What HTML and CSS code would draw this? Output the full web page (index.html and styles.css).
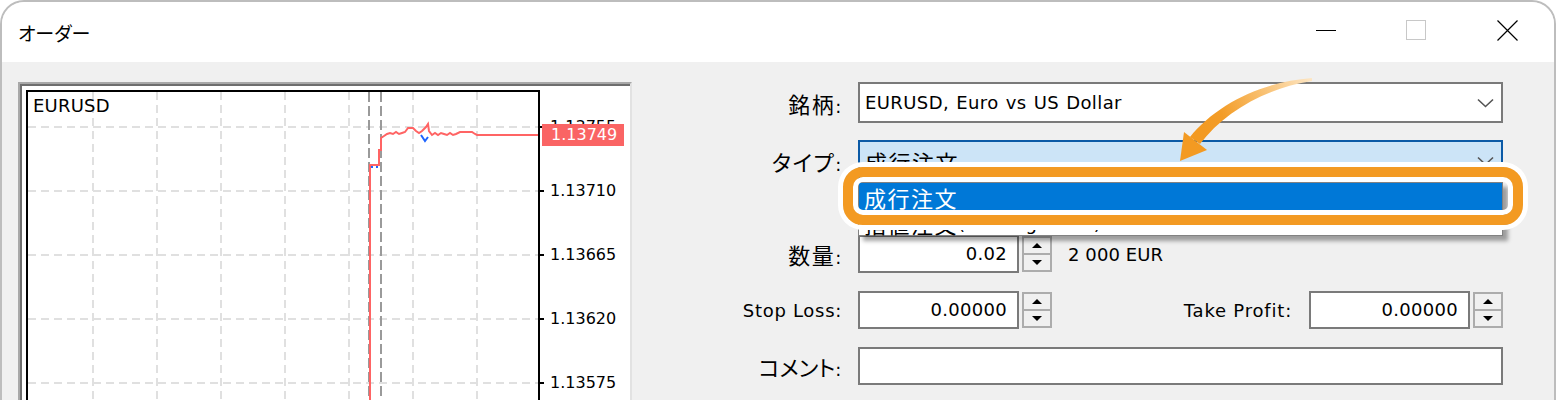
FILE: index.html
```html
<!DOCTYPE html>
<html lang="ja">
<head>
<meta charset="utf-8">
<title>オーダー</title>
<link rel="stylesheet" href="styles.css">
</head>
<body>
<div class="window">
  <div class="titlebar">
    <span class="title">オーダー</span>
    <div class="controls">
      <svg class="ctl-min" width="20" height="20" viewBox="0 0 20 20"><line x1="0" y1="10.5" x2="20" y2="10.5" stroke="#000" stroke-width="1"/></svg>
      <svg class="ctl-max" width="20" height="20" viewBox="0 0 20 20"><rect x="0.5" y="0.5" width="19" height="19" fill="none" stroke="#c8c8c8" stroke-width="1"/></svg>
      <svg class="ctl-close" width="21" height="21" viewBox="0 0 21 21"><path d="M0.5 0.5 L20.5 20.5 M20.5 0.5 L0.5 20.5" stroke="#000" stroke-width="1.2" fill="none"/></svg>
    </div>
  </div>
  <div class="body">
    <div class="chart">
      <div class="plot">
        <svg class="plot-svg" width="510" height="310" viewBox="28 92 510 310">
          <g stroke="#e0e0e0" stroke-width="2" stroke-dasharray="8 5" fill="none">
            <line x1="28" y1="127" x2="538" y2="127"/>
            <line x1="28" y1="191" x2="538" y2="191"/>
            <line x1="28" y1="255" x2="538" y2="255"/>
            <line x1="28" y1="319" x2="538" y2="319"/>
            <line x1="28" y1="383" x2="538" y2="383"/>
            <line x1="93" y1="92" x2="93" y2="402"/>
            <line x1="157" y1="92" x2="157" y2="402"/>
            <line x1="221" y1="92" x2="221" y2="402"/>
            <line x1="285" y1="92" x2="285" y2="402"/>
            <line x1="349" y1="92" x2="349" y2="402"/>
            <line x1="413" y1="92" x2="413" y2="402"/>
            <line x1="477" y1="92" x2="477" y2="402"/>
          </g>
          <g stroke="#9a9a9a" stroke-width="2" stroke-dasharray="10 4" fill="none">
            <line x1="369" y1="92" x2="369" y2="402"/>
            <line x1="381" y1="92" x2="381" y2="402"/>
          </g>
          <polyline fill="none" stroke="#ff6464" stroke-width="2" points="370,402 370,165 379,165 379,150 381,150 381,138 384,136 387,134 390,133 393,134 396,132 399,134 402,133 405,132 408,128 413,128 416,131 419,133 422,131 426,127 428,124 429,131 432,135 435,133 438,135 441,133 444,134 447,135 450,133 453,135 456,134 460,132 464,132 468,132 472,132 475,134 477,135 538,135"/>
          <g stroke="#1e64ff" stroke-width="2" fill="none">
            <line x1="371" y1="167" x2="373" y2="167"/>
            <line x1="376" y1="167" x2="378" y2="167"/>
            <polyline points="421,135 425,141 428,137"/>
          </g>
        </svg>
        <div class="symbol">EURUSD</div>
      </div>
      <div class="axis">
        <div class="price">1.13755</div>
        <div class="price">1.13710</div>
        <div class="price">1.13665</div>
        <div class="price">1.13620</div>
        <div class="price">1.13575</div>
        <div class="price-tag">1.13749</div>
      </div>
    </div>

    <div class="form">
      <div class="row row-symbol">
        <div class="label"><span class="jp">銘柄</span>:</div>
        <div class="combo">
          <span class="combo-text">EURUSD, Euro vs US Dollar</span>
          <svg class="chev" width="17" height="10" viewBox="0 0 17 10"><polyline points="1,1.5 8.5,8.5 16,1.5" fill="none" stroke="#555" stroke-width="1.6"/></svg>
        </div>
      </div>
      <div class="row row-type">
        <div class="label"><span class="jp">タイプ</span>:</div>
        <div class="combo active">
          <span class="jp">成行注文</span>
          <svg class="chev" width="17" height="10" viewBox="0 0 17 10"><polyline points="1,1.5 8.5,8.5 16,1.5" fill="none" stroke="#555" stroke-width="1.6"/></svg>
        </div>
      </div>
      <div class="row row-qty">
        <div class="label"><span class="jp">数量</span>:</div>
        <div class="field">0.02</div>
        <div class="spin"><span><i class="up"></i></span><span><i class="down"></i></span></div>
        <div class="note">2 000 EUR</div>
      </div>
      <div class="row row-sl">
        <div class="label">Stop Loss:</div>
        <div class="field">0.00000</div>
        <div class="spin"><span><i class="up"></i></span><span><i class="down"></i></span></div>
        <div class="tp-label">Take Profit:</div>
        <div class="field">0.00000</div>
        <div class="spin"><span><i class="up"></i></span><span><i class="down"></i></span></div>
      </div>
      <div class="row row-comment">
        <div class="label"><span class="jp jp-narrow">コメント</span>:</div>
        <div class="comment"></div>
      </div>

      <div class="dropdown">
        <div class="item sel"><span class="jp">成行注文</span></div>
        <div class="item"><span class="jp">指値注文</span>(Pending Order)</div>
      </div>
      <div class="highlight"></div>
      <svg class="arrow" width="150" height="100" viewBox="1170 70 150 100">
        <defs>
          <linearGradient id="ag" gradientUnits="userSpaceOnUse" x1="1312" y1="79" x2="1205" y2="135">
            <stop offset="0" stop-color="#fde6c4"/>
            <stop offset="0.45" stop-color="#f8bd6a"/>
            <stop offset="0.8" stop-color="#f39c26"/>
            <stop offset="1" stop-color="#f39a22"/>
          </linearGradient>
        </defs>
        <path d="M1312,78 C1262,82 1217,104 1190,137 L1200,144 C1224,112 1266,88 1312,81 Z" fill="url(#ag)"/>
        <path d="M1184,132 L1207,150 L1180,161 Z" fill="#f39a22"/>
      </svg>
    </div>
  </div>
</div>
</body>
</html>
```

FILE: styles.css
```css
* {
  box-sizing: border-box;
  margin: 0;
  padding: 0;
}

body {
  margin: 0;
  background: #fff;
  font-family: "DejaVu Sans", "Noto Sans CJK JP", sans-serif;
  font-size: 18px;
  color: #000;
  overflow: hidden;
}

.window {
  width: 1556px;
  height: 400px;
  border: 2px solid #bdbdbd;
  border-bottom: none;
  border-radius: 24px 24px 0 0;
  overflow: hidden;
  background: #f0f0f0;
}

.titlebar {
  height: 60px;
  background: #fff;
  display: flex;
  align-items: center;
  padding-left: 16px;
}

.title {
  font-family: "Noto Sans CJK JP", sans-serif;
  font-size: 19px;
  font-feature-settings: "palt" 1;
}

.controls {
  margin-left: auto;
  align-self: flex-start;
  margin-top: 18px;
  display: flex;
  align-items: flex-start;
  padding-right: 36px;
}

.ctl-max {
  margin-left: 70px;
}

.ctl-close {
  margin-left: 71px;
}

.body {
  display: flex;
  align-items: flex-start;
  padding: 20px 0 0 16px;
  height: 338px;
  overflow: hidden;
}

.chart {
  flex: none;
  width: 614px;
  height: 340px;
  display: flex;
  background: #fff;
  border-left: 2px solid #a8a8a8;
  border-top: 2px solid #a8a8a8;
  border-right: 2px solid #e2e2e2;
  box-shadow: inset 2px 2px 0 #6e6e6e;
  padding: 6px 0 0 6px;
}

.plot {
  flex: none;
  position: relative;
  width: 514px;
  height: 340px;
  border: 2px solid #000;
  border-bottom: none;
  background: #fff;
}

.plot-svg {
  display: block;
}

.symbol {
  position: absolute;
  left: 5px;
  top: 4px;
  line-height: 20px;
  letter-spacing: 0.2px;
}

.axis {
  position: relative;
  width: 90px;
  padding-top: 5px;
}

.price {
  position: relative;
  height: 64px;
  line-height: 64px;
  padding-left: 10px;
  font-size: 16px;
}

.price::before {
  content: "";
  position: absolute;
  left: 0;
  top: 31px;
  width: 4px;
  height: 2px;
  background: #000;
}

.price-tag {
  position: absolute;
  left: 2px;
  top: 34px;
  width: 82px;
  height: 22px;
  line-height: 22px;
  padding-left: 9px;
  font-size: 16px;
  color: #fff;
  background: #fa6464;
}

.form {
  position: relative;
  flex: none;
  width: 863px;
  margin-left: 8px;
}

.row {
  display: flex;
  align-items: center;
}

.row-type {
  margin-top: 17px;
}

.row-qty {
  margin-top: 54px;
}

.row-sl,
.row-comment {
  margin-top: 18px;
}

.label {
  flex: none;
  width: 202px;
  margin-right: 16px;
  text-align: right;
  letter-spacing: 0.7px;
}

.jp {
  font-family: "Noto Sans CJK JP", sans-serif;
  font-size: 22px;
  font-feature-settings: "palt" 1;
  letter-spacing: 1.5px;
}

.jp-narrow {
  letter-spacing: 0;
}

.combo {
  flex: none;
  display: flex;
  align-items: center;
  width: 645px;
  height: 41px;
  border: 2px solid #7a7a7a;
  background: #fff;
  padding-left: 5px;
  overflow: hidden;
}

.combo-text {
  word-spacing: 1px;
  letter-spacing: 0.4px;
}

.combo.active {
  border-color: #0b5aa6;
  background: #cce4f7;
}

.chev {
  margin-left: auto;
  margin-right: 7px;
  flex: none;
}

.field {
  flex: none;
  width: 161px;
  height: 38px;
  border: 2px solid #7a7a7a;
  background: #fff;
  text-align: right;
  padding-right: 10px;
  line-height: 34px;
  letter-spacing: 0.3px;
}

.spin {
  flex: none;
  display: flex;
  flex-direction: column;
  width: 30px;
  height: 36px;
  margin-left: 3px;
  border: 2px solid #acacac;
  background: #f0f0f0;
}

.spin span {
  flex: 1;
  display: flex;
  align-items: center;
  justify-content: center;
}

.spin span + span {
  border-top: 2px solid #acacac;
}

.up {
  width: 0;
  height: 0;
  border-left: 5px solid transparent;
  border-right: 5px solid transparent;
  border-bottom: 5px solid #000;
}

.down {
  width: 0;
  height: 0;
  border-left: 5px solid transparent;
  border-right: 5px solid transparent;
  border-top: 5px solid #000;
}

.note {
  margin-left: 16px;
  letter-spacing: 0.1px;
}

.tp-label {
  margin-left: auto;
  margin-right: 17px;
  letter-spacing: 0.8px;
}

.comment {
  flex: none;
  width: 645px;
  height: 38px;
  border: 2px solid #7a7a7a;
  background: #fff;
}

.dropdown {
  position: absolute;
  left: 218px;
  top: 100px;
  width: 645px;
  height: 54px;
  border: 1px solid #828282;
  background: #fff;
  box-shadow: 5px 5px 4px rgba(0, 0, 0, 0.35);
}

.item {
  height: 26px;
  display: flex;
  align-items: center;
  padding-left: 5px;
  white-space: nowrap;
}

.item.sel {
  height: 27px;
  background: #0078d7;
  color: #fff;
}

.highlight {
  position: absolute;
  left: 203px;
  top: 85px;
  width: 680px;
  height: 58px;
  border: 10px solid #f39a22;
  border-radius: 20px;
  box-shadow: 0 0 0 5px #fff, inset 0 0 0 5px #fff;
}

.arrow {
  position: absolute;
  left: 530px;
  top: -12px;
}
```
